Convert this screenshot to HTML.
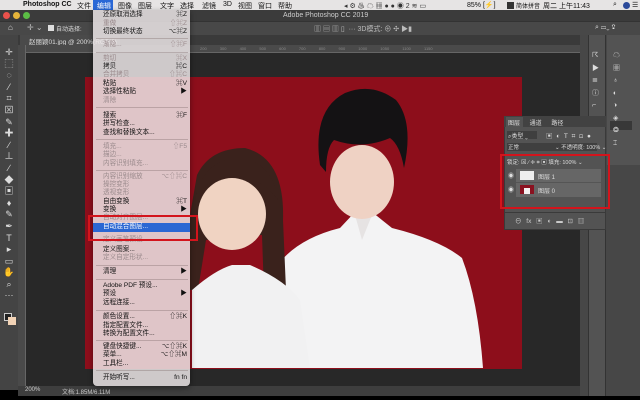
<!DOCTYPE html>
<html><head><meta charset="utf-8"><style>
*{margin:0;padding:0;box-sizing:border-box}
body{width:640px;height:400px;overflow:hidden;background:#000;font-family:"Liberation Sans","Noto Sans CJK SC",sans-serif;position:relative}
.a{position:absolute;white-space:nowrap}
.mb span{position:absolute;top:1px;font-size:7px;color:#111;white-space:nowrap}
.mi{position:absolute;left:103px;width:84px;font-size:6.6px;color:#111;line-height:8px;height:8px;white-space:nowrap}
.mi.g{color:#9a8a8c}
.mi b{position:absolute;right:0;font-weight:normal}
.sep{position:absolute;left:96px;width:92px;height:1px;background:rgba(120,100,100,.35)}
</style></head><body>
<div class="a mb" style="left:0;top:0;width:640px;height:10px;background:#e6e4e4">
<span style="left:8px;font-size:8px;top:0"></span>
<span style="left:23px;font-weight:bold">Photoshop CC</span>
<span style="left:77px">文件</span>
<span style="left:93px;top:0;width:20px;height:10px;background:#2a68d6"></span>
<span style="left:97px;color:#fff">编辑</span>
<span style="left:118px">图像</span><span style="left:138px">图层</span><span style="left:160px">文字</span><span style="left:180px">选择</span><span style="left:202px">滤镜</span><span style="left:223px">3D</span><span style="left:238px">视图</span><span style="left:258px">窗口</span><span style="left:278px">帮助</span>
<span style="left:344px;color:#333">◂ ⚙ ♨ ☁ ▦ ● ● ◉ 2 ≋ ▭</span>
<span style="left:467px">85% [⚡]</span>
<span style="left:507px;width:7px;height:7px;top:1.5px;background:#333"></span>
<span style="left:516px;font-size:6px">简体拼音</span>
<span style="left:543px">周二 上午11:43</span>
<span style="left:613px">⌕</span>
<span style="left:623px;width:7px;height:7px;top:1.5px;border-radius:50%;background:#2b4a9a"></span>
<span style="left:632px">☰</span>
</div>
<div class="a" style="left:0;top:10px;width:640px;height:11px;background:#3b3b3b"></div>
<div class="a" style="left:3px;top:12px;width:7px;height:7px;border-radius:50%;background:#e9514b"></div>
<div class="a" style="left:13px;top:12px;width:7px;height:7px;border-radius:50%;background:#e5b53a"></div>
<div class="a" style="left:23px;top:12px;width:7px;height:7px;border-radius:50%;background:#5bbd45"></div>
<div class="a" style="left:283px;top:12px;font-size:7px;color:#ccc">Adobe Photoshop CC 2019</div>
<div class="a" style="left:0;top:21px;width:640px;height:14px;background:#484848;border-top:1px solid #333"></div>
<div class="a" style="left:8px;top:23px;font-size:8px;color:#ddd">⌂</div>
<div class="a" style="left:27px;top:23px;font-size:8px;color:#bbb">✛ ⌄</div>
<div class="a" style="left:48px;top:25px;width:6px;height:6px;background:#ddd"></div>
<div class="a" style="left:56px;top:24px;font-size:6px;color:#ddd">自动选择:</div>
<div class="a" style="left:314px;top:24px;font-size:7px;color:#bbb">▥ ▤ ▥ ▯ &nbsp;··· 3D模式: ⊕ ✣ ▶▮</div>
<div class="a" style="left:595px;top:24px;font-size:7px;color:#ddd">⌕ ▭⌄ ⇪</div>
<div class="a" style="left:18px;top:35px;width:562px;height:10px;background:#3a3a3a"></div>
<div class="a" style="left:20px;top:35px;width:100px;height:10px;background:#4a4a4a"></div>
<div class="a" style="left:29px;top:36px;font-size:6.5px;color:#ddd">赵丽颖01.jpg @ 200%(RGB/8)</div>
<div class="a" style="left:18px;top:45px;width:562px;height:8px;background:#4a4a4a;border-bottom:1px solid #666"></div>
<div class="a" style="left:18px;top:45px;width:8px;height:345px;background:#4a4a4a;border-right:1px solid #666"></div>
<div class="a" style="left:200px;top:46px;font-size:4px;color:#888;word-spacing:12px">200 300 400 500 600 700 800 900 1000 1050 1100 1150</div>
<div class="a" style="left:0;top:35px;width:18px;height:355px;background:#444"></div>
<div class="a" style="left:3px;top:47px;font-size:9px;color:#ddd;line-height:11.6px;width:12px;text-align:center">✛<br>⬚<br>◌<br>⁄<br>⌗<br>⊠<br>✎<br>✚<br>∕<br>⊥<br>∕<br>◆<br>▣<br>♦<br>✎<br>✒<br>T<br>▸<br>▭<br>✋<br>⌕<br>···</div>
<div class="a" style="left:4px;top:313px;width:8px;height:8px;background:#222;border:1px solid #ccc"></div>
<div class="a" style="left:8px;top:317px;width:8px;height:8px;background:#f2d3b6"></div>
<div class="a" style="left:26px;top:53px;width:554px;height:333px;background:#282828"></div>
<svg class="a" style="left:0;top:0" width="640" height="400">
<rect x="85" y="77" width="437" height="292" fill="#8d0e1b"/>
<path d="M275 368 L280 262 Q300 238 340 228 L355 212 L372 212 L392 228 Q440 240 462 258 Q478 300 483 368 Z" fill="#f3f3f4"/>
<path d="M355 215 L362 240 L372 215 Z" fill="#e6e3e3"/>
<ellipse cx="362" cy="182" rx="32" ry="37" fill="#efd2c4"/>
<path d="M320 165 Q312 110 345 93 Q372 82 396 100 Q414 122 404 168 Q400 145 390 138 Q362 150 334 140 Q326 148 326 172 Z" fill="#141214"/>
<path d="M197 175 Q210 148 245 148 Q285 158 283 220 L286 290 L264 292 L262 235 L206 240 L198 290 L190 290 L190 215 Z" fill="#3a221c"/>
<ellipse cx="232" cy="214" rx="34" ry="36" fill="#f0d3c2"/>
<path d="M196 195 Q205 160 238 158 Q272 160 278 200 Q262 178 236 176 Q210 178 196 195 Z" fill="#3a221c"/>
<path d="M192 368 L192 290 Q215 270 232 265 L250 265 Q285 280 300 300 L310 368 Z" fill="#f1f1f2"/>
</svg>
<div class="a" style="left:18px;top:386px;width:562px;height:10px;background:#3e3e3e"></div>
<div class="a" style="left:25px;top:387px;font-size:6px;color:#ccc">200%</div>
<div class="a" style="left:62px;top:387px;font-size:6px;color:#ccc">文档:1.85M/6.11M</div>
<div class="a" style="left:580px;top:35px;width:60px;height:361px;background:#474747"></div>
<div class="a" style="left:588px;top:35px;width:18px;height:361px;background:#535353;border-left:1px solid #333;border-right:1px solid #333"></div>
<div class="a" style="left:607px;top:35px;width:33px;height:130px;background:#535353"></div>
<div class="a" style="left:610px;top:121px;width:22px;height:9px;background:#383838"></div>
<div class="a" style="left:592px;top:50px;font-size:7px;color:#ddd;line-height:12.5px">☈<br>▶<br>≣<br>ⓘ<br>⌐</div>
<div class="a" style="left:613px;top:50px;font-size:7px;color:#ddd;line-height:12.5px">☁<br>▦<br>♁<br>◐<br>◑<br>◈<br>❂<br>⌶</div>
<div class="a" style="left:504px;top:116px;width:102px;height:114px;background:#535353;border:1px solid #3a3a3a"></div>
<div class="a" style="left:504px;top:116px;width:102px;height:11px;background:#424242"></div>
<div class="a" style="left:506px;top:117px;width:17px;height:10px;background:#535353"></div>
<div class="a" style="left:508px;top:118px;font-size:6px;color:#ddd;word-spacing:8px">图层 通道 路径</div>
<div class="a" style="left:507px;top:131px;width:30px;height:8px;background:#3f3f3f"></div>
<div class="a" style="left:508px;top:131px;font-size:6px;color:#ddd">⌕类型 ⌄</div>
<div class="a" style="left:546px;top:130px;font-size:6.5px;color:#ddd;word-spacing:2px">▣ ◐ T ⌗ ⊡ ●</div>
<div class="a" style="left:507px;top:143px;width:90px;height:8px;background:#3f3f3f"></div>
<div class="a" style="left:508px;top:143px;font-size:5.5px;color:#ddd">正常</div>
<div class="a" style="left:555px;top:143px;font-size:5.5px;color:#ddd">⌄ 不透明度: 100% ⌄</div>
<div class="a" style="left:507px;top:158px;font-size:5.5px;color:#ddd">锁定: ⊠ ∕ ✛ ⌗ ▣ 填充: 100% ⌄</div>
<div class="a" style="left:516px;top:169px;width:85px;height:28px;background:#666"></div>
<div class="a" style="left:516px;top:182px;width:85px;height:1px;background:#555"></div>
<div class="a" style="left:508px;top:170px;font-size:6px;color:#ddd;line-height:14px">◉<br>◉</div>
<div class="a" style="left:520px;top:171px;width:14px;height:9px;background:#eee"></div>
<div class="a" style="left:520px;top:185px;width:14px;height:9px;background:#8a1220"></div>
<div class="a" style="left:524px;top:188px;width:6px;height:6px;background:#f4f0f0"></div>
<div class="a" style="left:538px;top:171px;font-size:6px;color:#ddd;line-height:14px">图层 1<br>图层 0</div>
<div class="a" style="left:504px;top:212px;width:102px;height:1px;background:#3a3a3a"></div>
<div class="a" style="left:515px;top:215px;font-size:6.5px;color:#ccc;word-spacing:3px">⊖ fx ▣ ◐ ▬ ⊡ ▥</div>
<div class="a" style="left:500px;top:154px;width:110px;height:55px;border:2px solid #d3141c"></div>
<div class="a" style="left:93px;top:10px;width:97px;height:376px;background:rgba(238,232,234,.84);border-radius:0 0 4px 4px;box-shadow:0 2px 6px rgba(0,0,0,.4)"></div>
<div class="a" style="left:93px;top:223px;width:97px;height:9px;background:#2b67d3"></div>
<div class="mi" style="top:11px">还原取消选择<b>⌘Z</b></div>
<div class="mi g" style="top:20px">重做<b>⇧⌘Z</b></div>
<div class="mi" style="top:28px">切换最终状态<b>⌥⌘Z</b></div>
<div class="sep" style="top:38px"></div>
<div class="mi g" style="top:41px">渐隐...<b>⇧⌘F</b></div>
<div class="sep" style="top:52px"></div>
<div class="mi g" style="top:55px">剪切<b>⌘X</b></div>
<div class="mi" style="top:63px">拷贝<b>⌘C</b></div>
<div class="mi g" style="top:71px">合并拷贝<b>⇧⌘C</b></div>
<div class="mi" style="top:80px">粘贴<b>⌘V</b></div>
<div class="mi" style="top:88px">选择性粘贴<b>▶</b></div>
<div class="mi g" style="top:97px">清除</div>
<div class="sep" style="top:107px"></div>
<div class="mi" style="top:112px">搜索<b>⌘F</b></div>
<div class="mi" style="top:120px">拼写检查...</div>
<div class="mi" style="top:129px">查找和替换文本...</div>
<div class="sep" style="top:139px"></div>
<div class="mi g" style="top:143px">填充...<b>⇧F5</b></div>
<div class="mi g" style="top:151px">描边...</div>
<div class="mi g" style="top:160px">内容识别填充...</div>
<div class="sep" style="top:170px"></div>
<div class="mi g" style="top:173px">内容识别缩放<b>⌥⇧⌘C</b></div>
<div class="mi g" style="top:181px">操控变形</div>
<div class="mi g" style="top:189px">透视变形</div>
<div class="mi" style="top:198px">自由变换<b>⌘T</b></div>
<div class="mi" style="top:206px">变换<b>▶</b></div>
<div class="mi g" style="top:214px">自动对齐图层...</div>
<div class="mi" style="top:223px;color:#fff">自动混合图层...</div>
<div class="mi g" style="top:236px">定义画笔预设...</div>
<div class="mi" style="top:246px">定义图案...</div>
<div class="mi g" style="top:254px">定义自定形状...</div>
<div class="sep" style="top:265px"></div>
<div class="mi" style="top:268px">清理<b>▶</b></div>
<div class="sep" style="top:279px"></div>
<div class="mi" style="top:282px">Adobe PDF 预设...</div>
<div class="mi" style="top:290px">预设<b>▶</b></div>
<div class="mi" style="top:299px">远程连接...</div>
<div class="sep" style="top:310px"></div>
<div class="mi" style="top:313px">颜色设置...<b>⇧⌘K</b></div>
<div class="mi" style="top:322px">指定配置文件...</div>
<div class="mi" style="top:330px">转换为配置文件...</div>
<div class="sep" style="top:340px"></div>
<div class="mi" style="top:343px">键盘快捷键...<b>⌥⇧⌘K</b></div>
<div class="mi" style="top:351px">菜单...<b>⌥⇧⌘M</b></div>
<div class="mi" style="top:360px">工具栏...</div>
<div class="sep" style="top:370px"></div>
<div class="mi" style="top:374px">开始听写...<b>fn fn</b></div>
<div class="a" style="left:88px;top:215px;width:110px;height:26px;border:2px solid #d3141c"></div>
</body></html>
